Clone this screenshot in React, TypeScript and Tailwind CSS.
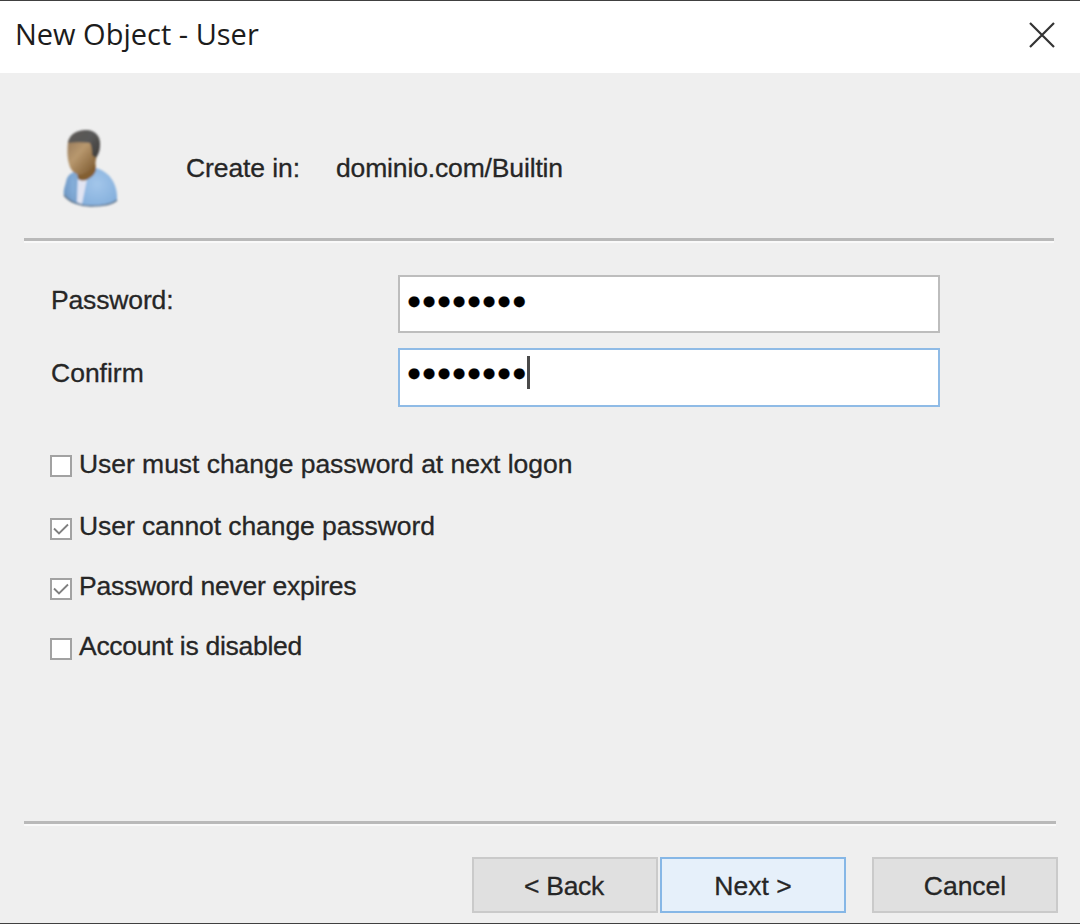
import clsx from "clsx";

const OPTIONS = [
  { label: "User must change password at next logon", checked: false, row: "h-[63px]", text: "-mt-[3px] tracking-[-0.04px]" },
  { label: "User cannot change password", checked: true, row: "h-[60px]", text: "-mt-[4px] tracking-[-0.08px]" },
  { label: "Password never expires", checked: true, row: "h-[60px]", text: "-mt-[4px] tracking-[-0.25px]" },
  { label: "Account is disabled", checked: false, row: "h-[60px]", text: "-mt-[4px] tracking-[-0.28px]" },
];

const BUTTONS = [
  { label: "< Back", primary: false, spacing: "pr-[2px] tracking-[-0.3px]" },
  { label: "Next >", primary: true, spacing: "ml-[2px]" },
  { label: "Cancel", primary: false, spacing: "ml-[26px]" },
];

function UserIcon() {
  return (
    <svg className="block h-[84px] w-[64px]" viewBox="0 0 64 84" fill="none">
      <defs>
        <linearGradient id="face" x1="8" y1="20" x2="36" y2="44" gradientUnits="userSpaceOnUse">
          <stop stopColor="#a08260" />
          <stop offset="0.35" stopColor="#b8986e" />
          <stop offset="1" stopColor="#7d5a30" />
        </linearGradient>
        <linearGradient id="hair" x1="12" y1="4" x2="40" y2="28" gradientUnits="userSpaceOnUse">
          <stop stopColor="#5c5a55" />
          <stop offset="0.5" stopColor="#585858" />
          <stop offset="1" stopColor="#403d3a" />
        </linearGradient>
        <radialGradient id="shirt" cx="0" cy="0" r="1" gradientUnits="userSpaceOnUse" gradientTransform="translate(37 58) rotate(60) scale(36 36)">
          <stop stopColor="#a3c6ea" />
          <stop offset="0.6" stopColor="#88b2de" />
          <stop offset="1" stopColor="#6b94c0" />
        </radialGradient>
        <filter id="soft" x="-5%" y="-5%" width="110%" height="110%">
          <feGaussianBlur stdDeviation="0.8" />
        </filter>
      </defs>
      <g filter="url(#soft)">
        <path d="M17 45C10 47 7 50 6 56c-1 4-3 9-2 13 5 7 16 11 27 11 12 0 22-2 26-6 1-13-5-24-14-29-3-2-6-3-9-3L17 45Z" fill="url(#shirt)" />
        <path d="M4 69c5 7 16 11 27 11 12 0 22-2 26-6" stroke="#5c6f86" strokeWidth="1.3" />
        <path d="M18 52l9 1-5 25-5-2 1-24Z" fill="#e1e4f2" />
        <path d="M15 48c1 9 0 19 0 27" stroke="#7b9fc5" strokeWidth="1" />
        <path d="M16 42l2 11c3 2 7 2 10 0 4-2 7-5 8-9l-1-12-19 10Z" fill="#835e33" />
        <path d="M8 16c-1 9-1 20 3 27 3 5 8 7 13 5 7-3 10-8 12-14l1-16L9 13l-1 3Z" fill="url(#face)" />
        <path d="M8 17C9 9 16 4 26 4c10 0 15 7 14 16 0 5-2 9-4 12l-4-3c0-4 0-8-2-12-7-1-15-1-22 0Z" fill="url(#hair)" />
      </g>
    </svg>
  );
}

function Divider({ className }: { className?: string }) {
  return <div className={clsx("h-[5px] border-t-[3px] border-b-2 border-t-[#b9b9b9] border-b-[#f9f9f9]", className)} />;
}

function PasswordField({ focused = false }: { focused?: boolean }) {
  return (
    <div
      className={clsx(
        "flex w-[542px] items-start border-2 bg-white pl-[6.5px]",
        focused ? "h-[59px] border-[#8fbbe6]" : "h-[58px] border-[#bdbdbd]"
      )}
    >
      <span className={clsx("text-[25px] leading-[34px] tracking-[-0.08px] text-black", focused ? "mt-[5px]" : "mt-[6px]")}>
        ●●●●●●●●
      </span>
      {focused && <span className="mt-[6px] h-[33px] w-[3px] bg-[#4a4a4a]" />}
    </div>
  );
}

function Checkbox({ checked }: { checked: boolean }) {
  return (
    <span className="mt-[4px] flex size-[22px] shrink-0 items-center justify-center border-2 border-[#a2a2a2] bg-white">
      {checked && (
        <svg className="size-[18px]" viewBox="0 0 18 18" fill="none" stroke="#808080" strokeWidth="1.9">
          <path d="M2 8.5L7 13.5L16 4.5" />
        </svg>
      )}
    </span>
  );
}

export default function App() {
  return (
    <div className="flex h-[924px] w-[1080px] flex-col overflow-hidden border-y border-[#404040] bg-[#efefef] font-['Liberation_Sans',Arial,sans-serif] text-[26.5px] text-[#262626] [-webkit-text-stroke:0.3px]">
      <header className="flex h-[72px] shrink-0 items-start justify-between bg-white pr-[25px] pl-[15px]">
        <h1 className="mt-[12px] font-['Open_Sans',sans-serif] text-[29px] leading-[42px] font-normal text-[#1c1c1c] [-webkit-text-stroke:0]">
          New Object - User
        </h1>
        <button aria-label="Close" className="mt-[21px]">
          <svg className="size-[26px]" viewBox="0 0 26 26" fill="none" stroke="#333333" strokeWidth="2.2">
            <path d="M1 1L25 25M25 1L1 25" />
          </svg>
        </button>
      </header>

      <section className="flex h-[165px] shrink-0 items-start pl-[60px]">
        <div className="mt-[53px]">
          <UserIcon />
        </div>
        <span className="mt-[79px] ml-[62px] w-[150px] leading-[32px] tracking-[-0.1px]">Create in:</span>
        <span className="mt-[79px] leading-[32px] tracking-[-0.15px]">dominio.com/Builtin</span>
      </section>

      <Divider className="mr-[26px] ml-[24px] shrink-0" />

      <section className="mt-[32px] flex shrink-0 flex-col gap-[15px] pl-[51px]">
        <div className="flex">
          <label className="mt-[9px] w-[347px] leading-[32px] tracking-[-0.15px]">Password:</label>
          <PasswordField />
        </div>
        <div className="flex">
          <label className="mt-[9px] w-[347px] leading-[32px]">Confirm</label>
          <PasswordField focused />
        </div>
      </section>

      <section className="mt-[44px] shrink-0 pl-[50px]">
        {OPTIONS.map((option) => (
          <div key={option.label} className={clsx("flex items-start gap-[7px]", option.row)}>
            <Checkbox checked={option.checked} />
            <span className={clsx("leading-[32px]", option.text)}>{option.label}</span>
          </div>
        ))}
      </section>

      <div className="mt-auto shrink-0">
        <Divider className="mr-[24px] ml-[24px]" />
        <div className="mt-[31px] mb-[10px] flex justify-end pr-[22px]">
          {BUTTONS.map((button) => (
            <button
              key={button.label}
              className={clsx(
                "h-[56px] w-[186px] border-2 pt-[3px]",
                button.primary ? "border-[#86b7e6] bg-[#e6f0fa]" : "border-[#cacaca] bg-[#e0e0e0]",
                button.spacing
              )}
            >
              {button.label}
            </button>
          ))}
        </div>
      </div>
    </div>
  );
}
